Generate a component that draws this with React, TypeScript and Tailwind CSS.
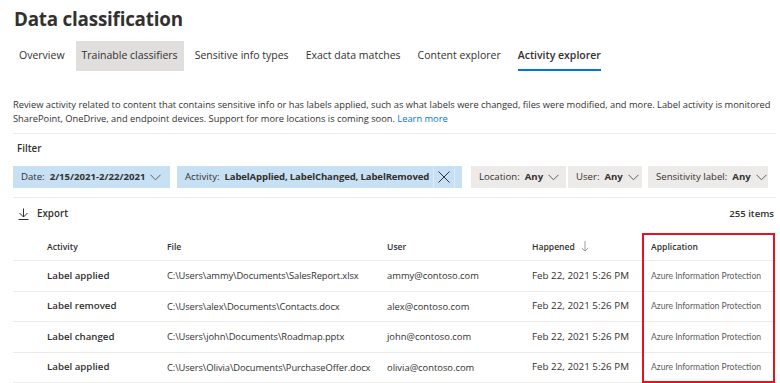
import React from "react";

const font = { fontFamily: '"Open Sans", "Noto Sans", sans-serif' };

function Chevron() {
    return (
        <svg width="11" height="7" viewBox="0 0 11 7" className="ml-[5px] shrink-0">
            <path d="M0.5 0.8 L5.5 5.8 L10.5 0.8" fill="none" stroke="#605e5c" strokeWidth="1" />
        </svg>
    );
}

interface ChipProps {
    label: string;
    value: string;
    blue?: boolean;
    className?: string;
}

function Chip({ label, value, blue, className }: ChipProps) {
    return (
        <div className={`flex items-center h-[22px] px-[8px] text-[9.6px] whitespace-nowrap text-[#323130] ${blue ? "bg-[#c7e0f4]" : "bg-[#edebe9]"} ${className ?? ""}`}>
            <span>{label}:</span>
            <span className="font-bold ml-[5px]">{value}</span>
            <Chevron />
        </div>
    );
}

const tabs = ["Overview", "Trainable classifiers", "Sensitive info types", "Exact data matches", "Content explorer", "Activity explorer"];

const rows = [
    { activity: "Label applied", file: "C:\\Users\\ammy\\Documents\\SalesReport.xlsx", user: "ammy@contoso.com" },
    { activity: "Label removed", file: "C:\\Users\\alex\\Documents\\Contacts.docx", user: "alex@contoso.com" },
    { activity: "Label changed", file: "C:\\Users\\john\\Documents\\Roadmap.pptx", user: "john@contoso.com" },
    { activity: "Label applied", file: "C:\\Users\\Olivia\\Documents\\PurchaseOffer.docx", user: "olivia@contoso.com" },
];

const cols = "grid grid-cols-[146px_220px_145px_119px_1fr]";

export default function App() {
    return (
        <div style={font} className="w-[780px] h-[383px] bg-white overflow-hidden pl-[13px] pr-[4px] text-[#323130]">
            <h1 className="text-[18.8px] font-bold leading-none pt-[10px] pl-px tracking-[-0.2px]">Data classification</h1>

            <div className="flex mt-[12px] h-[30px] text-[10.5px]">
                {tabs.map((t, i) => (
                    <div
                        key={t}
                        className={`relative flex items-center px-[6px] whitespace-nowrap ${i === 0 ? "ml-0" : "ml-[5px]"} ${i === 1 ? "bg-[#e1dfdd]" : ""} ${i === 5 ? "font-semibold" : ""}`}
                    >
                        {t}
                        {i === 5 && <div className="absolute left-[6px] right-[6px] bottom-0 h-[2px] bg-[#0078d4]" />}
                    </div>
                ))}
            </div>

            <p className="mt-[27px] text-[9.3px] leading-[14px] whitespace-nowrap">
                Review activity related to content that contains sensitive info or has labels applied, such as what labels were changed, files were modified, and more. Label activity is monitored
                <br />
                SharePoint, OneDrive, and endpoint devices. Support for more locations is coming soon. <span className="text-[#0078d4]">Learn more</span>
            </p>

            <div className="mt-[7px] border-t border-[#edebe9]" />

            <div className="mt-[8px] pl-[4px] text-[9.8px] font-semibold">Filter</div>

            <div className="flex mt-[10px]">
                <Chip label="Date" value="2/15/2021-2/22/2021" blue className="w-[157px]" />
                <div className="flex items-center h-[22px] ml-[7px] bg-[#c7e0f4] text-[9.6px] whitespace-nowrap pl-[8px] w-[285px]">
                    <span>Activity:</span>
                    <span className="font-bold ml-[5px] tracking-[-0.15px]">LabelApplied, LabelChanged, LabelRemoved</span>
                    <div className="ml-auto mr-[7px] w-[22px] h-[22px] shrink-0 flex items-center justify-center bg-[#c7e0f4] border-l border-r border-[#deecf9]">
                        <svg width="12" height="12" viewBox="0 0 12 12">
                            <path d="M0.5 0.5 L11.5 11.5 M11.5 0.5 L0.5 11.5" stroke="#323130" strokeWidth="1" />
                        </svg>
                    </div>
                </div>
                <Chip label="Location" value="Any" className="ml-[9px] w-[95px]" />
                <Chip label="User" value="Any" className="ml-[2px] w-[74px]" />
                <Chip label="Sensitivity label" value="Any" className="ml-[6px] w-[120px]" />
            </div>

            <div className="mt-[9px] border-t border-[#edebe9]" />

            <div className="flex items-center justify-between mt-[8px] h-[16px]">
                <div className="flex items-center pl-[5px]">
                    <svg width="11" height="12" viewBox="0 0 11 12">
                        <path d="M5.5 0.5 V9 M1.5 5 L5.5 9 L9.5 5 M0.5 11.5 H10.5" fill="none" stroke="#323130" strokeWidth="1" />
                    </svg>
                    <span className="ml-[8px] font-semibold text-[9.8px]">Export</span>
                </div>
                <span className="font-semibold pr-[2px] text-[9.6px]">255 items</span>
            </div>

            <div className="relative mt-[11px]">
                <div className={`${cols} h-[28px] items-center text-[8.6px] font-semibold border-b border-[#edebe9]`}>
                    <div className="pl-[34px]">Activity</div>
                    <div className="pl-[8px]">File</div>
                    <div className="pl-[8px]">User</div>
                    <div className="pl-[8px] flex items-center">
                        Happened
                        <svg width="8" height="11" viewBox="0 0 8 11" className="ml-[6px]">
                            <path d="M4 0 V10 M0.8 7 L4 10 L7.2 7" fill="none" stroke="#a19f9d" strokeWidth="1" />
                        </svg>
                    </div>
                    <div className="pl-[8px]">Application</div>
                </div>
                {rows.map((r, i) => (
                    <div key={i} className={`${cols} h-[30.5px] items-center text-[9.4px] border-b border-[#edebe9]`}>
                        <div className="pl-[34px] font-semibold text-[9.7px]">{r.activity}</div>
                        <div className="pl-[8px] whitespace-nowrap tracking-[-0.1px]">{r.file}</div>
                        <div className="pl-[8px] whitespace-nowrap">{r.user}</div>
                        <div className="pl-[8px] text-[9.8px] whitespace-nowrap">Feb 22, 2021 5:26 PM</div>
                        <div className="pl-[8px] text-[8.6px] text-[#605e5c] whitespace-nowrap" style={{ fontFamily: "Lato, sans-serif" }}>
                            Azure Information Protection
                        </div>
                    </div>
                ))}
                <div className="absolute left-[629px] top-0 w-[133px] h-[150px] border-2 border-[#e81123] pointer-events-none" />
            </div>
        </div>
    );
}
